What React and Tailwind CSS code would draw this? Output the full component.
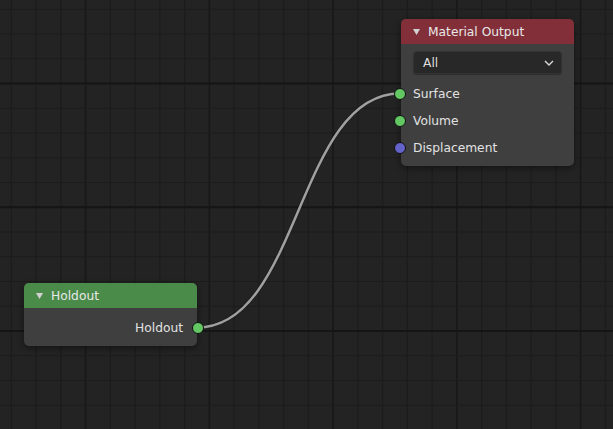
import React from 'react';

const FONT = { fontFamily: '"DejaVu Sans", "Liberation Sans", sans-serif' };

const Grid = () => {
  const step = 24.75;
  const x0 = 11.3;
  const y0 = 9.3;
  const lines = [];
  for (let i = 0; i < 26; i++) {
    const x = x0 + step * i;
    const major = i % 5 === 3;
    lines.push(
      <line key={'v' + i} x1={x} y1={0} x2={x} y2={429} stroke={major ? '#181818' : '#1c1c1c'} strokeWidth={major ? 1.6 : 1.1} />
    );
  }
  for (let j = 0; j < 18; j++) {
    const y = y0 + step * j;
    const major = j % 5 === 3;
    lines.push(
      <line key={'h' + j} x1={0} y1={y} x2={613} y2={y} stroke={major ? '#151515' : '#1c1c1c'} strokeWidth={major ? 2 : 1.1} />
    );
  }
  return (
    <svg className="absolute inset-0" width="613" height="429">
      {lines}
    </svg>
  );
};

const Wire = () => (
  <svg className="absolute inset-0 pointer-events-none" width="613" height="429">
    <path d="M197 327.5 C 300 327.5, 297 93.5, 400 93.5" fill="none" stroke="#1a1a1a" strokeWidth="4" opacity="0.4" />
    <path d="M197 327.5 C 300 327.5, 297 93.5, 400 93.5" fill="none" stroke="#a0a0a0" strokeWidth="2.5" />
  </svg>
);

const Triangle = () => (
  <svg width="7" height="6" viewBox="0 0 7 6" className="shrink-0">
    <path d="M0 0 L7 0 L3.5 6 Z" fill="#d2d2d2" />
  </svg>
);

const Socket = ({ color, side }) => (
  <span
    className={`absolute top-1/2 -translate-y-1/2 w-[12px] h-[12px] rounded-full border border-[#111] ${side === 'left' ? 'left-[-7px]' : 'right-[-7px]'}`}
    style={{ backgroundColor: color }}
  />
);

const Node = ({ title, header, left, top, children }) => (
  <div
    className="absolute w-[173px] rounded-[5px] bg-[#3f3f3f] shadow-[0_2px_6px_rgba(0,0,0,0.45)]"
    style={{ left, top }}
  >
    <div className={`h-[25px] rounded-t-[5px] flex items-center pl-[12px] gap-[8px] ${header}`}>
      <Triangle />
      <span className="text-[12.25px] text-[#e8e8e8] translate-y-[1px]">{title}</span>
    </div>
    {children}
  </div>
);

export default function App() {
  return (
    <div className="relative w-[613px] h-[429px] overflow-hidden bg-[#232323]" style={FONT}>
      <Grid />
      <Wire />

      <Node title="Material Output" header="bg-[#822f39]" left={401} top={19}>
        <div className="pt-[7px] pb-[5px]">
          <div className="mx-[12px] h-[23px] rounded-[4px] bg-[#282828] border border-[#333] shadow-[0_1px_1px_rgba(0,0,0,0.3)] flex items-center justify-between pl-[9px] pr-[7px]">
            <span className="text-[12.25px] text-[#dedede] translate-y-[1px]">All</span>
            <svg width="10" height="6" viewBox="0 0 10 6">
              <path d="M1 1 L5 5 L9 1" fill="none" stroke="#d8d8d8" strokeWidth="1.4" />
            </svg>
          </div>
          <div className="mt-[6px] flex flex-col">
            {[
              ['Surface', '#63c763'],
              ['Volume', '#63c763'],
              ['Displacement', '#6363c7'],
            ].map(([label, color]) => (
              <div key={label} className="relative h-[27px] flex items-center pl-[12px]">
                <Socket color={color} side="left" />
                <span className="text-[12.25px] text-[#e2e2e2] translate-y-[1px]">{label}</span>
              </div>
            ))}
          </div>
        </div>
      </Node>

      <Node title="Holdout" header="bg-[#4a8b4a]" left={24} top={283}>
        <div className="pt-[6px] pb-[5px]">
          <div className="relative h-[27px] flex items-center justify-end pr-[14px]">
            <span className="text-[12.25px] text-[#e2e2e2] translate-y-[1px]">Holdout</span>
            <Socket color="#63c763" side="right" />
          </div>
        </div>
      </Node>
    </div>
  );
}
